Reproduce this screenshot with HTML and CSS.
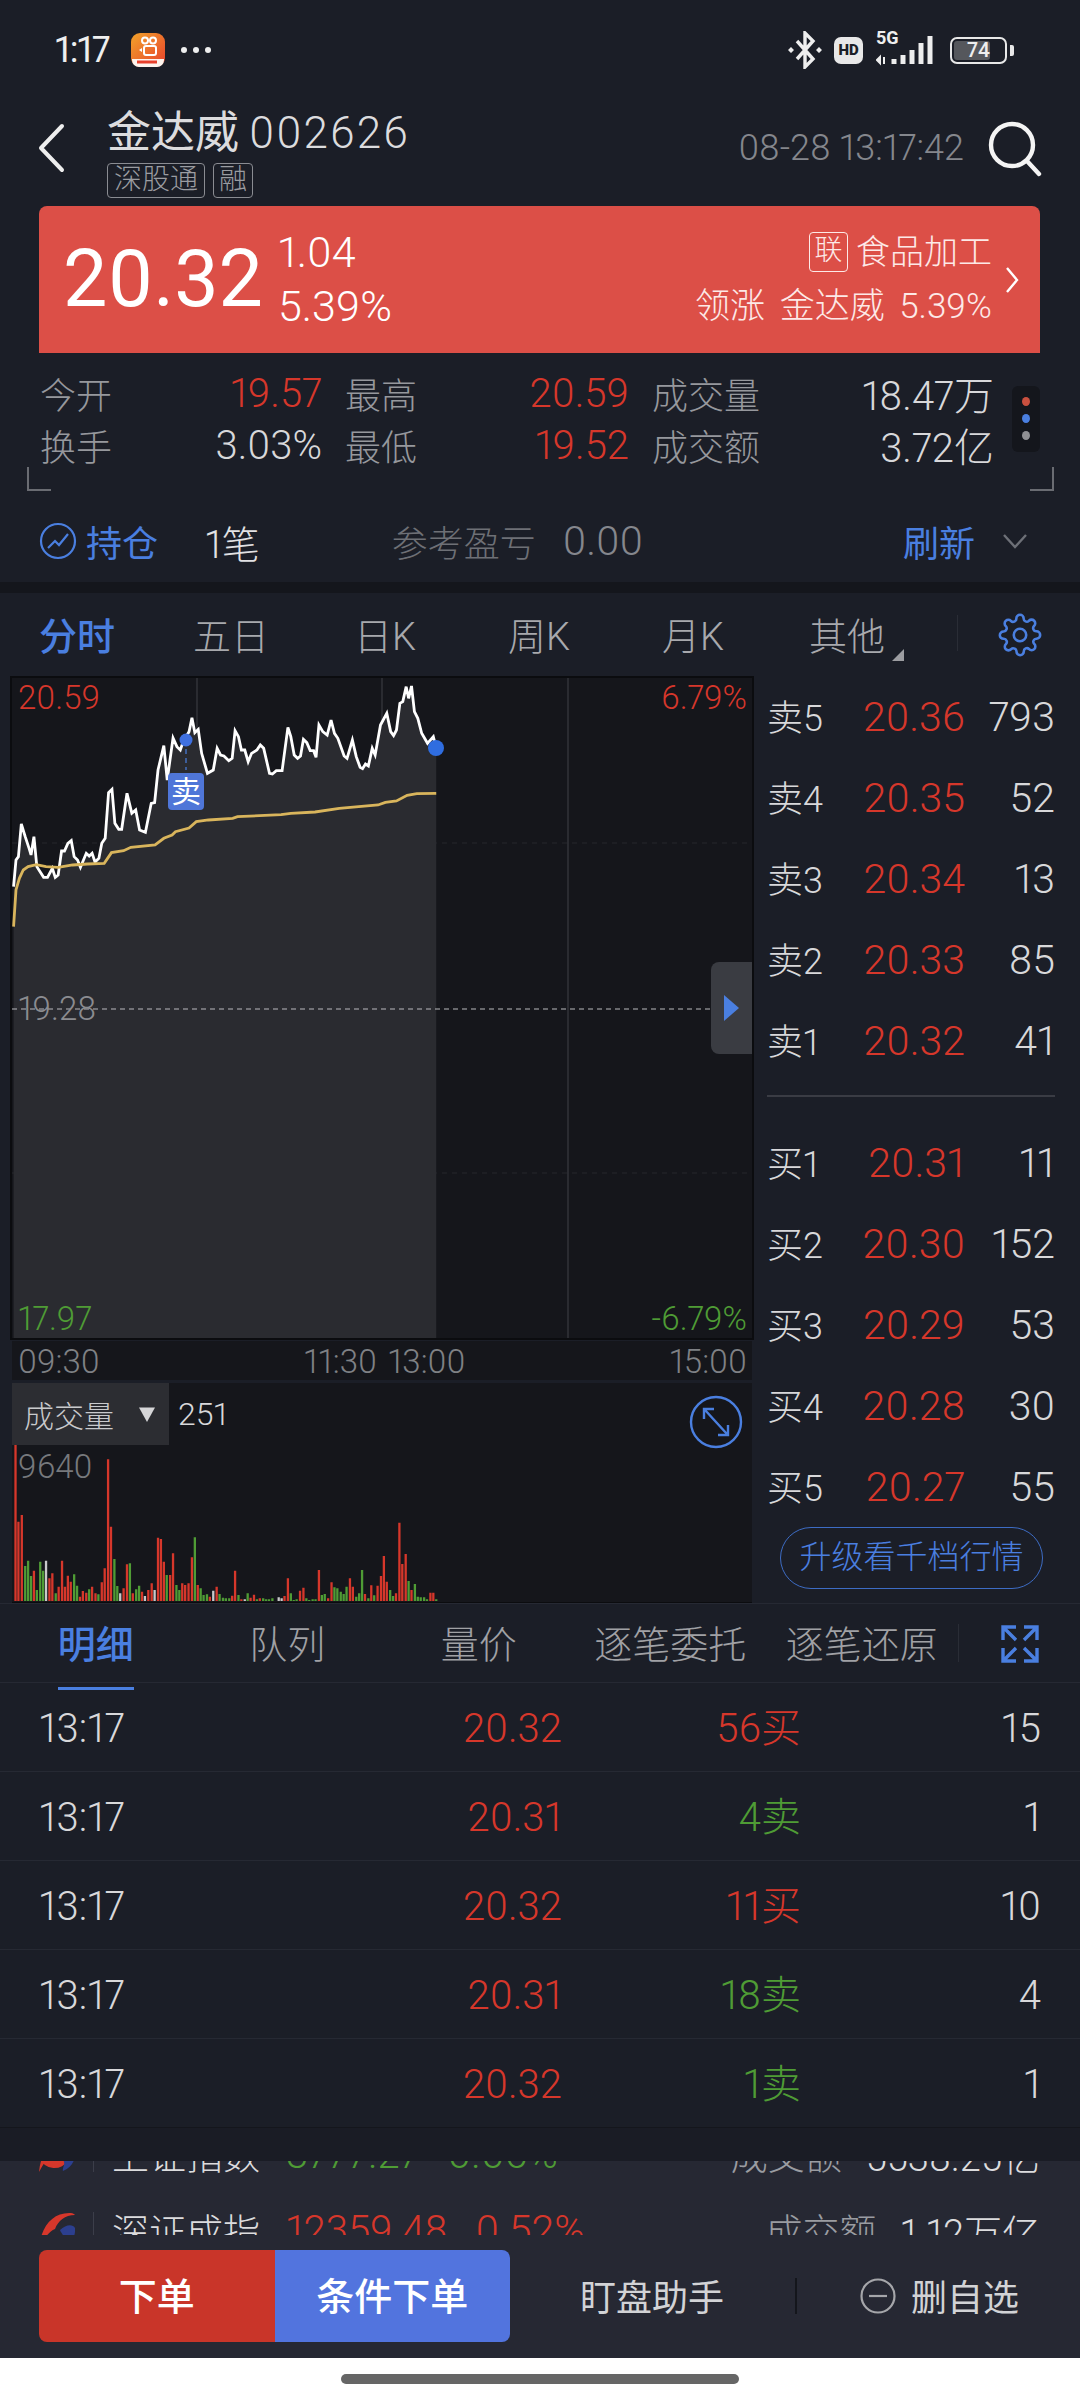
FILE: index.html
```html
<!DOCTYPE html>
<html lang="zh-CN">
<head>
	<meta charset="UTF-8" />
	<meta name="viewport" content="width=device-width, initial-scale=1.0" />
	<title>金达威 002626</title>
	<link rel="stylesheet" href="styles.css">
</head>
<body>
	<div class="screen">
		<!-- status bar -->
		<div class="status">
			<span class="clock">1:17</span>
			<svg class="app-badge" viewBox="0 0 34 34" width="34" height="34">
				<defs><linearGradient id="badge" x1="0" y1="0" x2="1" y2="1"><stop offset="0" stop-color="#f2a32a"/><stop offset="1" stop-color="#e8402c"/></linearGradient></defs>
				<rect width="34" height="34" rx="9" fill="url(#badge)"/>
				<path d="M1 26h32v1a7 7 0 0 1-7 7H8a7 7 0 0 1-7-7z" fill="#fdf4ee"/>
				<path d="M6 29h20" stroke="#e8402c" stroke-width="3"/>
				<circle cx="14" cy="7.5" r="3" fill="none" stroke="#fff" stroke-width="2"/>
				<circle cx="22" cy="7.5" r="3" fill="none" stroke="#fff" stroke-width="2"/>
				<rect x="13" y="13" width="12" height="9" rx="2" fill="none" stroke="#fff" stroke-width="2"/>
				<path d="M11 15l-3 2 3 2z" fill="#fff"/>
			</svg>
			<span class="more-dots"><i></i><i></i><i></i></span>
			<div class="status-right">
				<svg class="bt" viewBox="0 0 34 38" width="34" height="38"><path d="M9 10l16 18-8 8V2l8 8L9 28" fill="none" stroke="#eee" stroke-width="3.4"/><path d="M0 19l3-3 3 3-3 3zM28 19l3-3 3 3-3 3z" fill="#eee"/></svg>
				<span class="hd">HD</span>
				<div class="signal">
					<span class="five-g">5G</span>
					<svg viewBox="0 0 60 30" width="60" height="30"><path d="M4 21l-3 3 3 3zM8 21v7" fill="#eee" stroke="#eee" stroke-width="2"/><path d="M18 23v5M27 19v9M36 14v14M45 7v21M54 0v28" stroke="#eee" stroke-width="5"/></svg>
				</div>
				<div class="battery"><span class="battery-fill"></span><span class="battery-num">74</span></div>
				<span class="battery-nub"></span>
			</div>
		</div>

		<!-- stock title -->
		<header class="title-bar">
			<svg class="back" viewBox="0 0 28 50" width="28" height="50"><path d="M25 3L4 25l21 22" fill="none" stroke="#eee" stroke-width="4" stroke-linecap="round" stroke-linejoin="round"/></svg>
			<div class="title-main">
				<div class="stock-name">金达威 <span>002626</span></div>
				<div class="tags"><span>深股通</span><span>融</span></div>
			</div>
			<span class="stamp">08-28 13:17:42</span>
			<svg class="search" viewBox="0 0 54 56" width="54" height="56"><circle cx="24" cy="24" r="21" fill="none" stroke="#f4f4f4" stroke-width="4.4"/><path d="M39 40l12 13" stroke="#f4f4f4" stroke-width="4.4" stroke-linecap="round"/></svg>
		</header>

		<!-- quote card -->
		<section class="quote">
			<div class="last-price">20.32</div>
			<div class="change"><span>1.04</span><span>5.39%</span></div>
			<div class="sector">
				<div class="sector-top"><b>联</b>食品加工</div>
				<div class="sector-lead">领涨 金达威 5.39%</div>
			</div>
			<svg class="sector-arrow" viewBox="0 0 14 28" width="14" height="28"><path d="M2 2l10 12L2 26" fill="none" stroke="#fff" stroke-width="2.4"/></svg>
		</section>

		<!-- day stats -->
		<section class="stats">
			<div class="stat"><span>今开</span><em class="up">19.57</em></div>
			<div class="stat"><span>最高</span><em class="up">20.59</em></div>
			<div class="stat"><span>成交量</span><em>18.47万</em></div>
			<div class="stat"><span>换手</span><em>3.03%</em></div>
			<div class="stat"><span>最低</span><em class="up">19.52</em></div>
			<div class="stat"><span>成交额</span><em>3.72亿</em></div>
			<div class="page-dots"><i class="dot-red"></i><i class="dot-blue"></i><i class="dot-grey"></i></div>
			<i class="corner corner-l"></i>
			<i class="corner corner-r"></i>
		</section>

		<!-- position -->
		<section class="position">
			<svg viewBox="0 0 38 38" width="38" height="38"><circle cx="19" cy="19" r="17" fill="none" stroke="#4a7fe0" stroke-width="2.2"/><path d="M9 26l7-7 4 4 9-11" fill="none" stroke="#4a7fe0" stroke-width="2.2"/></svg>
			<span class="pos-label">持仓</span>
			<span class="pos-count">1笔</span>
			<span class="pos-pl">参考盈亏</span>
			<span class="pos-value">0.00</span>
			<span class="pos-refresh">刷新</span>
			<svg viewBox="0 0 26 16" width="26" height="16"><path d="M2 2l11 12L24 2" fill="none" stroke="#6d7077" stroke-width="2.4"/></svg>
		</section>

		<div class="band"></div>

		<!-- chart period tabs -->
		<nav class="periods">
			<a class="active">分时</a>
			<a>五日</a>
			<a>日K</a>
			<a>周K</a>
			<a>月K</a>
			<a class="has-more">其他</a>
			<i class="tab-rule"></i>
			<svg class="gear" viewBox="0 0 24 24" width="44" height="44"><circle cx="12" cy="12" r="3.4"/><path d="M19.4 15a1.65 1.65 0 0 0 .33 1.82l.06.06a2 2 0 0 1 0 2.83 2 2 0 0 1-2.83 0l-.06-.06a1.65 1.65 0 0 0-1.82-.33 1.65 1.65 0 0 0-1 1.51V21a2 2 0 0 1-2 2 2 2 0 0 1-2-2v-.09A1.65 1.65 0 0 0 9 19.4a1.65 1.65 0 0 0-1.82.33l-.06.06a2 2 0 0 1-2.83 0 2 2 0 0 1 0-2.83l.06-.06a1.65 1.65 0 0 0 .33-1.82 1.65 1.65 0 0 0-1.51-1H3a2 2 0 0 1-2-2 2 2 0 0 1 2-2h.09A1.65 1.65 0 0 0 4.6 9a1.65 1.65 0 0 0-.33-1.82l-.06-.06a2 2 0 0 1 0-2.83 2 2 0 0 1 2.83 0l.06.06a1.65 1.65 0 0 0 1.82.33H9a1.65 1.65 0 0 0 1-1.51V3a2 2 0 0 1 2-2 2 2 0 0 1 2 2v.09a1.65 1.65 0 0 0 1 1.51 1.65 1.65 0 0 0 1.82-.33l.06-.06a2 2 0 0 1 2.83 0 2 2 0 0 1 0 2.83l-.06.06a1.65 1.65 0 0 0-.33 1.82V9a1.65 1.65 0 0 0 1.51 1H21a2 2 0 0 1 2 2 2 2 0 0 1-2 2h-.09a1.65 1.65 0 0 0-1.51 1z"/></svg>
		</nav>

		<div class="market">
			<div class="charts">
				<!-- intraday price chart -->
				<div class="price-chart">
					<svg class="price-svg" viewBox="0 0 740 660" width="740" height="660">
						<path class="grid-line" d="M0 165H740M0 495H740"/>
						<path class="hour-line" d="M185 0V660M370 0V660M556 0V660"/>
						<g transform="translate(-12,-8) scale(.4847,.3333)">
							<path class="area" d="M28 650L33 570 38 560 44 462 52 500 60 535 64 555 70 500 76 590 90 622 98 622 108 595 114 622 120 615 127 543 133 543 140 520 147 512 153 560 160 570 166 592 178 550 184 558 190 550 196 576 204 565 210 520 217 505 224 368 231 358 237 460 245 478 251 478 262 370 272 430 280 420 288 480 300 487 312 400 319 398 326 300 338 227 345 330 357 204 365 230 372 240 378 215 390 185 396 143 402 188 409 178 416 250 428 310 440 300 448 235 455 255 462 258 472 272 479 265 485 182 492 200 498 240 505 240 512 275 519 250 530 240 537 225 544 235 556 310 562 312 570 302 582 302 594 172 600 200 607 255 614 265 620 258 626 208 633 218 640 242 647 242 652 262 658 165 666 185 675 195 683 150 690 190 697 205 710 258 716 265 727 210 735 260 743 292 748 296 754 282 760 288 768 235 774 255 785 165 798 130 806 185 812 197 818 180 825 100 831 95 838 50 843 85 849 48 855 125 862 145 870 190 882 220 894 200 900 234V2004H28Z"/>
							<path class="price-line" d="M28 650L33 570 38 560 44 462 52 500 60 535 64 555 70 500 76 590 90 622 98 622 108 595 114 622 120 615 127 543 133 543 140 520 147 512 153 560 160 570 166 592 178 550 184 558 190 550 196 576 204 565 210 520 217 505 224 368 231 358 237 460 245 478 251 478 262 370 272 430 280 420 288 480 300 487 312 400 319 398 326 300 338 227 345 330 357 204 365 230 372 240 378 215 390 185 396 143 402 188 409 178 416 250 428 310 440 300 448 235 455 255 462 258 472 272 479 265 485 182 492 200 498 240 505 240 512 275 519 250 530 240 537 225 544 235 556 310 562 312 570 302 582 302 594 172 600 200 607 255 614 265 620 258 626 208 633 218 640 242 647 242 652 262 658 165 666 185 675 195 683 150 690 190 697 205 710 258 716 265 727 210 735 260 743 292 748 296 754 282 760 288 768 235 774 255 785 165 798 130 806 185 812 197 818 180 825 100 831 95 838 50 843 85 849 48 855 125 862 145 870 190 882 220 894 200 900 234"/>
							<path class="avg-line" d="M28 770L33 660 40 625 48 600 58 590 75 584 95 590 120 592 150 585 180 582 215 580 230 548 255 542 270 532 320 525 338 505 355 495 362 485 390 474 405 455 430 450 480 445 490 440 580 434 600 430 650 426 700 415 780 405 795 397 818 393 840 376 860 371 900 370"/>
						</g>
						<path class="base-line" d="M0 331H740"/>
						<path class="trade-tail" d="M174 62V92"/>
						<circle class="trade-dot" cx="174" cy="62" r="6.5"/>
						<circle class="last-dot" cx="424" cy="70" r="8"/>
					</svg>
					<span class="axis top-left up">20.59</span>
					<span class="axis top-right up">6.79%</span>
					<span class="axis mid-left">19.28</span>
					<span class="axis low-left down">17.97</span>
					<span class="axis low-right down">-6.79%</span>
					<span class="trade-chip">卖</span>
					<div class="book-handle"><i></i></div>
				</div>

				<div class="time-axis">
					<span>09:30</span>
					<span class="t-1130">11:30</span>
					<span class="t-1300">13:00</span>
					<span class="t-1500">15:00</span>
				</div>

				<!-- volume bars -->
				<div class="volume">
					<div class="volume-head">
						<div class="volume-chip">成交量<i></i></div>
						<span class="volume-now">251</span>
						<svg class="expand" viewBox="0 0 54 54" width="54" height="54"><circle cx="27" cy="27" r="25" fill="none" stroke="#4a7fe0" stroke-width="2.4"/><path d="M16 15l22 24M15 24v-10h10M39 30v10H29" fill="none" stroke="#4a7fe0" stroke-width="2.4"/></svg>
					</div>
					<span class="volume-max">9640</span>
					<svg class="volume-svg" viewBox="0 0 740 219" width="740" height="219">
						<g transform="translate(-12,-63) scale(.4847,.3333)">
							<path class="bar-up" d="M32 843V375M38 843V605M45 843V585M70 843V752M102 843V775M108 843V760M121 843V800M128 843V722M134 843V800M140 843V767M146 843V785M165 843V830M171 843V813M178 843V818M190 843V800M197 843V820M210 843V787M216 843V745M223 843V418M229 843V620M255 843V805M262 843V733M274 843V820M293 843V815M306 843V810M313 843V790M326 843V653M332 843V657M338 843V725M351 843V765M357 843V700M376 843V790M382 843V795M389 843V790M396 843V712M408 843V795M433 843V830M447 843V800M479 843V827M485 843V752M498 843V838M517 843V833M524 843V824M536 843V835M587 843V828M594 843V775M619 843V812M626 843V803M658 843V750M677 843V835M684 843V787M722 843V775M728 843V800M753 843V822M766 843V796M779 843V797M786 843V768M792 843V708M798 843V785M817 843V820M824 843V608M830 843V732M837 843V702M849 843V810M888 843V818M894 843V818"/>
							<path class="bar-down" d="M52 843V738M58 843V722M64 843V768M76 843V810M83 843V725M89 843V752M115 843V820M153 843V763M159 843V797M184 843V808M203 843V823M236 843V717M242 843V798M268 843V730M281 843V808M287 843V797M344 843V765M364 843V795M370 843V810M402 843V652M414 843V805M420 843V825M427 843V823M453 843V822M460 843V833M466 843V835M473 843V835M492 843V825M511 843V820M530 843V838M543 843V835M549 843V838M555 843V838M562 843V835M600 843V820M606 843V840M612 843V838M632 843V835M638 843V840M645 843V838M651 843V838M664 843V825M670 843V822M690 843V802M696 843V805M703 843V815M709 843V822M715 843V800M735 843V830M741 843V820M747 843V750M760 843V835M772 843V826M805 843V810M811 843V828M843 843V783M856 843V792M862 843V830M868 843V832M875 843V832M881 843V838M900 843V838"/>
							<path class="bar-flat" d="M95 843V722M248 843V820M299 843V828M319 843V810M440 843V812M505 843V838M575 843V832M581 843V835"/>
						</g>
					</svg>
				</div>
			</div>

			<!-- order book -->
			<aside class="book">
				<div class="book-row"><span>卖5</span><em>20.36</em><b>793</b></div>
				<div class="book-row"><span>卖4</span><em>20.35</em><b>52</b></div>
				<div class="book-row"><span>卖3</span><em>20.34</em><b>13</b></div>
				<div class="book-row"><span>卖2</span><em>20.33</em><b>85</b></div>
				<div class="book-row"><span>卖1</span><em>20.32</em><b>41</b></div>
				<hr class="book-rule" />
				<div class="book-row"><span>买1</span><em>20.31</em><b>11</b></div>
				<div class="book-row"><span>买2</span><em>20.30</em><b>152</b></div>
				<div class="book-row"><span>买3</span><em>20.29</em><b>53</b></div>
				<div class="book-row"><span>买4</span><em>20.28</em><b>30</b></div>
				<div class="book-row"><span>买5</span><em>20.27</em><b>55</b></div>
				<a class="upgrade">升级看千档行情</a>
			</aside>
		</div>

		<!-- trade detail -->
		<section class="detail">
			<nav class="detail-tabs">
				<a class="active">明细</a>
				<a>队列</a>
				<a>量价</a>
				<a>逐笔委托</a>
				<a>逐笔还原</a>
				<i class="tab-rule"></i>
				<svg class="fullscreen" viewBox="0 0 38 38" width="38" height="38"><path d="M2 15V2h13M3 3l12 12M36 15V2H23M35 3L23 15M2 23v13h13M3 35l12-12M36 23v13H23M35 35L23 23" fill="none" stroke="#4a7fe0" stroke-width="3.4"/></svg>
			</nav>
			<div class="tick"><span>13:17</span><em class="up">20.32</em><em class="up">56买</em><b>15</b></div>
			<div class="tick"><span>13:17</span><em class="up">20.31</em><em class="down">4卖</em><b>1</b></div>
			<div class="tick"><span>13:17</span><em class="up">20.32</em><em class="up">11买</em><b>10</b></div>
			<div class="tick"><span>13:17</span><em class="up">20.31</em><em class="down">18卖</em><b>4</b></div>
			<div class="tick"><span>13:17</span><em class="up">20.32</em><em class="down">1卖</em><b>1</b></div>
		</section>

		<!-- index ticker, mid scroll so both rows are cut off -->
		<section class="ticker">
			<div class="ticker-inner">
				<div class="ticker-row">
					<svg viewBox="0 0 36 36" width="36" height="36"><path d="M0 36C2 14 14 0 32 1c2 0 3 1 4 2-10 0-17 6-20 14-7 3-11 10-16 19z" fill="#d6372b"/><path d="M1 22a15 14 0 0 0 28 2z" fill="#d6372b"/><path d="M21 18c6-6 13-6 15-2 1 8-4 16-12 19-1-2 2-6 1-9-1-4-3-5-4-8z" fill="#2c3f8f"/></svg>
					<i></i>
					<span class="idx-name">上证指数</span>
					<em class="idx-val down">3777.27</em>
					<em class="idx-pct down">0.06%</em>
					<span class="idx-label">成交额</span>
					<b>5538.25亿</b>
				</div>
				<div class="ticker-row">
					<svg viewBox="0 0 36 36" width="36" height="36"><path d="M0 36C2 14 14 0 32 1c2 0 3 1 4 2-10 0-17 6-20 14-7 3-11 10-16 19z" fill="#d6372b"/><path d="M21 18c6-6 13-6 15-2 1 8-4 16-12 19-1-2 2-6 1-9-1-4-3-5-4-8z" fill="#2c3f8f"/></svg>
					<i></i>
					<span class="idx-name">深证成指</span>
					<em class="idx-val up">12359.48</em>
					<em class="idx-pct up">0.52%</em>
					<span class="idx-label">成交额</span>
					<b>1.12万亿</b>
				</div>
			</div>
		</section>

		<!-- bottom actions -->
		<footer class="actions">
			<div class="order-btns">
				<a class="btn-order">下单</a>
				<a class="btn-cond">条件下单</a>
			</div>
			<a class="assist">盯盘助手</a>
			<i class="action-rule"></i>
			<a class="remove">
				<svg viewBox="0 0 36 36" width="36" height="36"><circle cx="18" cy="18" r="16.5" fill="none" stroke="#a5a6aa" stroke-width="2.2"/><path d="M9 18h18" stroke="#a5a6aa" stroke-width="2.2"/></svg>
				<span>删自选</span>
			</a>
		</footer>

		<div class="home-bar"><i></i></div>
	</div>
</body>
</html>
```

FILE: styles.css
```css
html,
body {
	margin: 0;
	background: #fff;
}
.screen {
	width: 1080px;
	height: 2400px;
	overflow: hidden;
	background: #1b1e27;
	color: #d8d8da;
	font-family: Roboto, "Noto Sans CJK SC", sans-serif;
	font-weight: 300;
	font-variant-numeric: proportional-nums;
}
em,
b,
i {
	font-style: normal;
	font-weight: inherit;
}
.up {
	color: #d6372b;
}
.down {
	color: #4f9c35;
}

/* status bar */
.status {
	display: flex;
	align-items: center;
	height: 100px;
	padding: 0 66px 0 55px;
	box-sizing: border-box;
	color: #eee;
}
.clock {
	width: 76px;
	font-size: 36px;
	font-weight: 400;
	letter-spacing: -1px;
}
.more-dots {
	display: flex;
	gap: 6px;
	margin-left: 16px;
}
.more-dots i {
	width: 6px;
	height: 6px;
	border-radius: 50%;
	background: #eee;
}
.status-right {
	display: flex;
	align-items: center;
	margin-left: auto;
}
.bt {
	margin-right: 12px;
}
.hd {
	width: 29px;
	height: 27px;
	border-radius: 7px;
	background: #e8e8e8;
	color: #1b1e27;
	font-size: 15px;
	font-weight: 900;
	line-height: 27px;
	text-align: center;
	margin-right: 13px;
}
.signal {
	position: relative;
	width: 60px;
	height: 30px;
	margin-right: 14px;
	margin-top: 2px;
}
.five-g {
	position: absolute;
	left: 0;
	top: -7px;
	font-size: 18px;
	font-weight: 700;
	line-height: 18px;
}
.battery {
	position: relative;
	width: 57px;
	height: 27px;
	border: 2.5px solid #e8e8e8;
	border-radius: 7px;
	box-sizing: border-box;
	overflow: hidden;
}
.battery-fill {
	position: absolute;
	left: 2px;
	top: 2px;
	bottom: 2px;
	width: 36px;
	border-radius: 3px;
	background: #55575c;
}
.battery-num {
	position: relative;
	display: block;
	text-align: center;
	font-size: 21px;
	font-weight: 500;
	line-height: 22px;
}
.battery-nub {
	width: 4px;
	height: 11px;
	margin-left: 3px;
	border-radius: 0 2px 2px 0;
	background: #e8e8e8;
}

/* title */
.title-bar {
	display: flex;
	align-items: center;
	height: 106px;
	padding: 0 40px 0 37px;
	box-sizing: border-box;
}
.back {
	margin-top: -10px;
}
.title-main {
	margin-left: 42px;
}
.stock-name {
	font-size: 44px;
	font-weight: 400;
	line-height: 52px;
	margin-top: -2px;
	color: #dcdcde;
}
.stock-name span {
	font-weight: 300;
	letter-spacing: 2px;
	margin-left: -1px;
}
.tags {
	display: flex;
	gap: 8px;
	margin-top: 4px;
}
.tags span {
	height: 35px;
	padding: 0 6px;
	border: 1.5px solid #8a8c92;
	border-radius: 4px;
	box-sizing: border-box;
	font-size: 28px;
	line-height: 31px;
	color: #9a9ca1;
}
.tags span + span {
	padding: 0 5px;
}
.stamp {
	margin-left: auto;
	margin-top: -10px;
	margin-right: 24px;
	font-size: 36px;
	color: #85878d;
}
.search {
	margin-top: -8px;
	margin-right: -2px;
}

/* quote card */
.quote {
	display: flex;
	align-items: center;
	height: 147px;
	margin: 0 40px 0 39px;
	padding: 0 21px 0 24px;
	box-sizing: border-box;
	border-radius: 8px 8px 0 0;
	background: #dc4f47;
	color: #fff;
}
.last-price {
	font-size: 79px;
	font-weight: 400;
	line-height: 1;
}
.change {
	display: flex;
	flex-direction: column;
	gap: 11px;
	margin-left: 15px;
	font-size: 43px;
	line-height: 43px;
}
.sector {
	margin-left: auto;
	margin-right: 13px;
	text-align: right;
	color: #fde9e7;
}
.sector-top {
	display: flex;
	align-items: center;
	justify-content: flex-end;
	font-size: 34px;
	line-height: 40px;
}
.sector-top b {
	width: 39px;
	height: 40px;
	margin-right: 8px;
	border: 1.5px solid #fde9e7;
	border-radius: 4px;
	box-sizing: border-box;
	text-align: center;
	font-size: 28px;
	line-height: 36px;
}
.sector-lead {
	margin-top: 15px;
	font-size: 35px;
	line-height: 40px;
	word-spacing: 6px;
}

/* stats */
.stats {
	position: relative;
	display: grid;
	grid-template-columns: 282px 284px 342px;
	grid-auto-rows: 52px;
	column-gap: 23px;
	height: 137px;
	padding: 14px 0 0 40px;
	box-sizing: border-box;
	font-size: 36px;
}
.stat {
	display: flex;
	justify-content: space-between;
	align-items: center;
}
.stat span {
	color: #96989d;
}
.stat em {
	font-size: 40px;
}
.page-dots {
	position: absolute;
	right: 40px;
	top: 33px;
	display: flex;
	flex-direction: column;
	align-items: center;
	gap: 8px;
	width: 28px;
	height: 66px;
	padding-top: 11px;
	box-sizing: border-box;
	border-radius: 6px;
	background: #14161c;
}
.page-dots i {
	width: 8px;
	height: 9px;
	border-radius: 50%;
}
.dot-red {
	background: #c9503f;
}
.dot-blue {
	background: #4a7fe0;
}
.dot-grey {
	background: #8f9094;
}
.corner {
	position: absolute;
	top: 114px;
	width: 22px;
	height: 22px;
	border-bottom: 2px solid #6a6c72;
}
.corner-l {
	left: 27px;
	border-left: 2px solid #6a6c72;
}
.corner-r {
	right: 26px;
	border-right: 2px solid #6a6c72;
}

/* position strip */
.position {
	display: flex;
	align-items: center;
	height: 92px;
	padding: 10px 52px 0 39px;
	box-sizing: border-box;
	font-size: 36px;
}
.pos-label {
	margin-left: 9px;
	color: #4a7fe0;
	font-weight: 400;
}
.pos-count {
	margin-left: 47px;
	font-size: 38px;
	color: #e2e2e4;
}
.pos-pl {
	margin-left: 132px;
	color: #6e7076;
}
.pos-value {
	margin-left: 27px;
	font-size: 41px;
	color: #85878d;
}
.pos-refresh {
	margin-left: auto;
	margin-right: 27px;
	color: #4a7fe0;
	font-weight: 400;
}
.band {
	height: 11px;
	background: #14161c;
}

/* period tabs */
.periods {
	position: relative;
	display: grid;
	grid-template-columns: repeat(6, 154px) 1fr;
	align-items: center;
	height: 85px;
	padding-bottom: 5px;
	box-sizing: border-box;
	font-size: 38px;
	color: #a8a9ad;
}
.periods a {
	text-align: center;
}
.periods a.active {
	position: relative;
	color: #4a7fe0;
	font-weight: 500;
}
.periods a.active::after {
	content: "";
	position: absolute;
	left: 40px;
	right: 40px;
	bottom: -21px;
	height: 4px;
	background: #4a7fe0;
	border-radius: 2px;
}
.periods a.has-more::after {
	content: "";
	position: absolute;
	left: 892px;
	top: 56px;
	border-style: solid;
	border-width: 0 0 12px 12px;
	border-color: transparent transparent #9c9da1 transparent;
}
.periods .tab-rule {
	position: absolute;
	left: 957px;
	top: 22px;
	height: 36px;
}
.tab-rule {
	width: 1px;
	background: #2a2d36;
}
.gear {
	position: absolute;
	left: 998px;
	top: 20px;
	fill: none;
	stroke: #4a7fe0;
	stroke-width: 1.4;
}

/* chart + order book */
.market {
	display: flex;
	height: 925px;
}
.charts {
	width: 740px;
	margin-left: 12px;
	flex: none;
}
.price-chart {
	position: relative;
	height: 660px;
	background: #15161b;
	box-shadow: 0 0 0 2px #0b0c0f;
	color: #8b8c90;
	font-size: 33px;
}
.price-svg,
.volume-svg {
	display: block;
}
.grid-line {
	stroke: #26272c;
	stroke-dasharray: 5 5;
	stroke-width: 1;
}
.hour-line {
	stroke: #34353a;
	stroke-width: 1.4;
}
.area {
	fill: #2a2b30;
}
.price-line,
.avg-line,
.bar-up,
.bar-down,
.bar-flat {
	fill: none;
	vector-effect: non-scaling-stroke;
}
.price-line {
	stroke: #fff;
	stroke-width: 2.8;
}
.avg-line {
	stroke: #d9b55c;
	stroke-width: 2.8;
}
.base-line {
	stroke: #b9babd;
	stroke-width: 1.2;
	stroke-dasharray: 5 4;
}
.trade-tail {
	stroke: #4a7fe0;
	stroke-dasharray: 5 4;
	stroke-width: 1.2;
}
.trade-dot {
	fill: #3f70e0;
}
.last-dot {
	fill: #2f6de0;
}
.axis {
	position: absolute;
	line-height: 32px;
}
.top-left {
	left: 6px;
	top: 4px;
}
.top-right {
	right: 5px;
	top: 4px;
}
.mid-left {
	left: 6px;
	top: 315px;
}
.low-left {
	left: 6px;
	bottom: 3px;
}
.low-right {
	right: 5px;
	bottom: 3px;
}
.trade-chip {
	position: absolute;
	left: 156px;
	top: 95px;
	width: 36px;
	height: 37px;
	border-radius: 4px;
	background: #4f76d8;
	color: #fff;
	font-size: 30px;
	font-weight: 400;
	line-height: 37px;
	text-align: center;
}
.book-handle {
	position: absolute;
	right: 0;
	top: 284px;
	width: 41px;
	height: 92px;
	border-radius: 8px 0 0 8px;
	background: #3a3c42;
	display: flex;
	align-items: center;
	justify-content: center;
}
.book-handle i {
	border-style: solid;
	border-width: 13px 0 13px 15px;
	border-color: transparent transparent transparent #4a7fe0;
}
.time-axis {
	display: flex;
	height: 39px;
	margin-top: 3px;
	padding: 0 5px 0 6px;
	background: #15161b;
	font-size: 33px;
	line-height: 41px;
	color: #7f8185;
}
.t-1130 {
	margin-left: 204px;
}
.t-1300 {
	margin-left: 11px;
}
.t-1500 {
	margin-left: auto;
}
.volume {
	position: relative;
	height: 219px;
	margin-top: 3px;
	background: #15161b;
	box-shadow: 0 2px 0 #0b0c0f;
}
.volume-head {
	position: absolute;
	left: 0;
	right: 0;
	top: 0;
	display: flex;
	align-items: flex-start;
}
.volume-chip {
	display: flex;
	align-items: center;
	width: 157px;
	height: 62px;
	padding-left: 12px;
	box-sizing: border-box;
	background: #2c2d32;
	font-size: 30px;
	color: #c9cacc;
}
.volume-chip i {
	width: 16px;
	height: 16px;
	margin-left: 25px;
	background: #d5d5d7;
	clip-path: polygon(0 10%, 100% 10%, 50% 100%);
}
.volume-now {
	margin-left: 9px;
	font-size: 32px;
	line-height: 63px;
	color: #d8d8da;
}
.expand {
	margin-left: auto;
	margin-top: 12px;
	margin-right: 9px;
}
.volume-max {
	position: absolute;
	left: 6px;
	top: 66px;
	font-size: 33px;
	line-height: 36px;
	color: #77797d;
}
.volume-svg {
	position: absolute;
	left: 0;
	top: 0;
}
.bar-up {
	stroke: #d6372b;
	stroke-width: 2.3;
}
.bar-down {
	stroke: #4f9c35;
	stroke-width: 2.3;
}
.bar-flat {
	stroke: #c9c9cb;
	stroke-width: 2.3;
}

/* order book */
.book {
	flex: 1;
	padding-left: 16px;
	margin-top: -2px;
}
.book-row {
	display: grid;
	grid-template-columns: 70px 127px 90px;
	align-items: center;
	height: 81px;
	font-size: 41px;
}
.book-row span {
	margin-top: -3px;
	margin-left: -1px;
	font-size: 36px;
	white-space: nowrap;
}
.book-row em {
	text-align: right;
	color: #d6372b;
}
.book-row b {
	text-align: right;
}
.book-rule {
	width: 288px;
	height: 2px;
	margin: 14px 0 25px -1px;
	border: 0;
	background: #3a3c44;
}
.upgrade {
	display: block;
	width: 263px;
	height: 62px;
	margin-left: 12px;
	border: 1.5px solid #3d6cc4;
	border-radius: 31px;
	box-sizing: border-box;
	text-align: center;
	font-size: 32px;
	line-height: 58px;
	color: #4a7fe0;
}

/* tick list */
.detail {
	height: 558px;
	background: #1a1c25;
}
.detail-tabs {
	position: relative;
	display: grid;
	grid-template-columns: repeat(5, 191.5px) 1fr;
	align-items: center;
	height: 80px;
	padding-bottom: 3px;
	font-size: 38px;
	color: #a0a1a5;
	background: #1b1e27;
	border-top: 1px solid #262933;
	border-bottom: 1px solid #262933;
	box-sizing: border-box;
}
.detail-tabs a {
	text-align: center;
}
.detail-tabs a.active {
	position: relative;
	color: #4a7fe0;
	font-weight: 500;
}
.detail-tabs a.active::after {
	content: "";
	position: absolute;
	left: 58px;
	right: 58px;
	bottom: -21px;
	height: 3px;
	background: #4a7fe0;
}
.detail-tabs .tab-rule {
	position: absolute;
	left: 958px;
	top: 20px;
	height: 38px;
}
.fullscreen {
	position: absolute;
	left: 1001px;
	top: 21px;
}
.tick {
	display: grid;
	grid-template-columns: 300px 223px 239px 240px;
	align-items: center;
	height: 89px;
	padding: 3px 0 0 39px;
	box-sizing: border-box;
	border-bottom: 1px solid #262933;
	font-size: 40px;
	line-height: 48px;
	background: #1b1e27;
}
.tick em,
.tick b {
	text-align: right;
}
.tick:nth-child(6) {
	border-bottom-color: #14161c;
}

/* index ticker */
.ticker {
	height: 74px;
	overflow: hidden;
	background: #262833;
}
.ticker-inner {
	margin-top: -45px;
}
.ticker-row {
	display: flex;
	align-items: center;
	height: 76px;
	padding: 0 40px 0 39px;
	box-sizing: border-box;
	font-size: 37px;
}
.ticker-row i {
	width: 1px;
	height: 36px;
	margin-left: 18px;
	background: #3c3e4a;
}
.idx-name {
	margin-left: 18px;
	color: #dcdcde;
}
.idx-val {
	margin-left: 26px;
	font-size: 40px;
}
.idx-pct {
	margin-left: 28px;
	font-size: 41px;
}
.idx-label {
	margin-left: auto;
	color: #9a9ca1;
}
.ticker-row b {
	margin-left: 24px;
	color: #dcdcde;
	font-size: 38px;
}

/* actions */
.actions {
	display: flex;
	align-items: center;
	height: 123px;
	padding: 15px 0 16px 39px;
	box-sizing: border-box;
	background: #262833;
	font-size: 36px;
	color: #d2d3d6;
}
.order-btns {
	display: flex;
	width: 471px;
	height: 92px;
	border-radius: 8px;
	overflow: hidden;
	color: #fff;
	font-size: 38px;
	font-weight: 500;
	line-height: 94px;
	text-align: center;
}
.btn-order {
	flex: 1;
	background: #c93529;
}
.btn-cond {
	flex: 1;
	background: #5274de;
}
.assist {
	margin-left: 70px;
	margin-top: -3px;
	font-weight: 400;
}
.action-rule {
	width: 2px;
	height: 36px;
	margin-left: 71px;
	background: #14161c;
}
.remove {
	display: flex;
	align-items: center;
	gap: 15px;
	margin-left: 63px;
	font-weight: 400;
}
.remove span {
	margin-top: -3px;
}

/* gesture bar */
.home-bar {
	height: 42px;
	background: #fff;
	display: flex;
	justify-content: center;
	padding-top: 16px;
	box-sizing: border-box;
}
.home-bar i {
	width: 398px;
	height: 10px;
	border-radius: 5px;
	background: #666;
}
```
